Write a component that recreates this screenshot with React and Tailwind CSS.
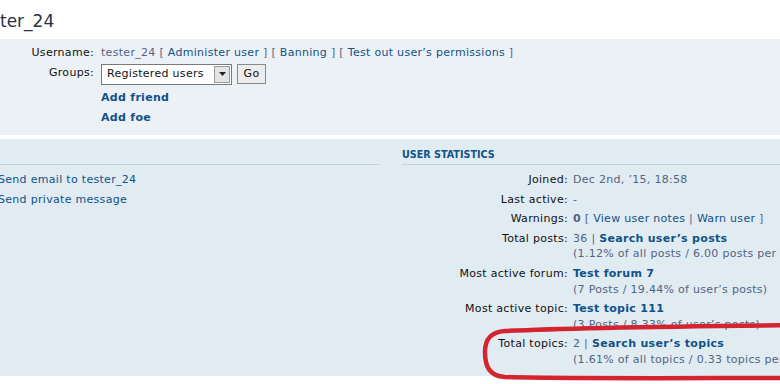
import React from "react";

const stats = [
  { label: "Joined:", value: <span>Dec 2nd, ’15, 18:58</span> },
  { label: "Last active:", value: <span>-</span> },
  {
    label: "Warnings:",
    value: (
      <span>
        <b className="text-[#536482]">0</b> [ <a className="text-[#105289]">View user notes</a> | <a className="text-[#105289]">Warn user</a> ]
      </span>
    ),
  },
  {
    label: "Total posts:",
    value: (
      <span>
        36 | <a className="font-bold text-[#105289]">Search user’s posts</a>
      </span>
    ),
    sub: "(1.12% of all posts / 6.00 posts per day)",
  },
  {
    label: "Most active forum:",
    value: <a className="font-bold text-[#105289]">Test forum 7</a>,
    sub: "(7 Posts / 19.44% of user’s posts)",
  },
  {
    label: "Most active topic:",
    value: <a className="font-bold text-[#105289]">Test topic 111</a>,
    sub: "(3 Posts / 8.33% of user’s posts)",
  },
  {
    label: "Total topics:",
    value: (
      <span>
        2 | <a className="font-bold text-[#105289]">Search user’s topics</a>
      </span>
    ),
    sub: "(1.61% of all topics / 0.33 topics per day)",
  },
];

export default function App() {
  return (
    <div className="relative w-[780px] h-[384px] overflow-hidden bg-white font-['DejaVu_Sans',Verdana,sans-serif] text-[11px] leading-[15.75px] tracking-[0.3px] whitespace-nowrap">
      {/* Title */}
      <div className="h-[39px] pt-[11px]">
        <h2 className="text-[17px] leading-[20px] tracking-normal text-[#28313f]">ter_24</h2>
      </div>

      {/* Profile panel */}
      <div className="h-[96px] bg-[#ecf1f5] pt-[6px]">
        <div className="flex">
          <div className="w-[94px] shrink-0 text-right text-[#111]">Username:</div>
          <div className="pl-[7px] text-[#536482]">
            tester_24 [ <a className="text-[#105289]">Administer user</a> ] [ <a className="text-[#105289]">Banning</a> ] [ <a className="text-[#105289]">Test out user’s permissions</a> ]
          </div>
        </div>
        <div className="flex items-center mt-[3px]">
          <div className="w-[94px] shrink-0 text-right text-[#111] -mt-[2px]">Groups:</div>
          <div className="pl-[7px] flex items-center">
            <div className="flex items-center w-[131px] h-[21px] bg-white border border-[#7a7a7a]">
              <span className="flex-1 pl-[5px] text-[#111]">Registered users</span>
              <span className="flex items-center justify-center w-[16px] h-[17px] mr-[1px] bg-[#e4e4e4] border border-[#9a9a9a]">
                <svg width="7" height="4" viewBox="0 0 7 4">
                  <path d="M0 0 L7 0 L3.5 4 Z" fill="#222" />
                </svg>
              </span>
            </div>
            <button className="ml-[5px] w-[29px] h-[20px] bg-[#ececec] border border-[#8a8a8a] text-[#111] text-[11px] leading-[18px]">
              Go
            </button>
          </div>
        </div>
        <div className="pl-[101px] mt-[5px] flex flex-col gap-y-[4.25px]">
          <a className="font-bold text-[#105289]">Add friend</a>
          <a className="font-bold text-[#105289]">Add foe</a>
        </div>
      </div>

      {/* Stats panel */}
      <div className="mt-[4px] h-[237px] bg-[#e1ebf2] flex">
        <div className="w-[382px] shrink-0 -ml-[2px]">
          <div className="h-[26px] border-b border-[#c6d2da]" />
          <div className="mt-[7px] flex flex-col gap-y-[3.75px] text-[#105289]">
            <a>Send email to tester_24</a>
            <a>Send private message</a>
          </div>
        </div>
        <div className="ml-[22px] w-[420px] shrink-0">
          <div className="h-[26px] pt-[8px] border-b border-[#c6d2da]">
            <h3 className="text-[9.6px] leading-[15.5px] tracking-normal font-bold uppercase text-[#105289]">User statistics</h3>
          </div>
          <div className="mt-[7px] flex flex-col gap-y-[3.75px]">
            {stats.map((row) => (
              <div key={row.label} className="flex">
                <div className="w-[166px] shrink-0 text-right text-[#111]">{row.label}</div>
                <div className="pl-[5px] text-[#536482]">
                  <div>{row.value}</div>
                  {row.sub && <div>{row.sub}</div>}
                </div>
              </div>
            ))}
          </div>
        </div>
      </div>

      {/* Red hand-drawn highlight */}
      <svg className="absolute left-0 top-0 pointer-events-none" width="780" height="384" viewBox="0 0 780 384">
        <path
          d="M 800 325 C 700 326, 560 328, 505 331 C 490 332, 485 340, 485 352 C 485 366, 489 376, 505 377 C 560 379, 700 378, 800 378"
          fill="none"
          stroke="#d42430"
          strokeWidth="4.5"
          strokeLinecap="round"
        />
      </svg>
    </div>
  );
}
